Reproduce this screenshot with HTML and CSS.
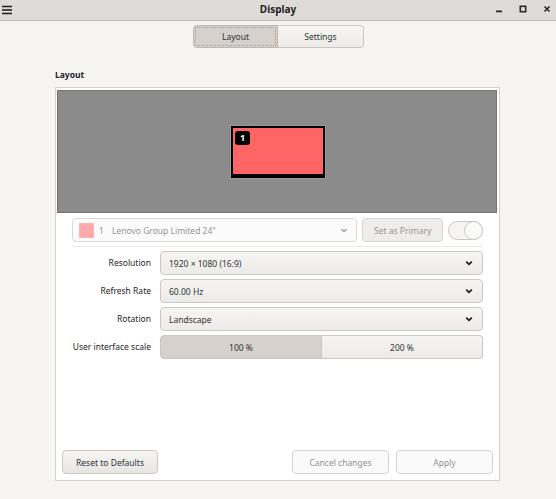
FILE: index.html
```
<!DOCTYPE html>
<html>
<head>
<meta charset="utf-8">
<link rel="stylesheet" href="styles.css">
</head>
<body>
<div class="window">
  <header class="titlebar">
    <svg class="hamburger" width="12" height="12" viewBox="0 0 12 12"><path d="M1 3.5h10M1 7h10M1 10.5h10" stroke="#1d1d1d" stroke-width="1.6"/></svg>
    <div class="title">Display</div>
    <div class="controls">
      <svg width="8" height="8" viewBox="0 0 8 8"><rect x="1" y="5.5" width="6" height="1.8" fill="#2a2a2a"/></svg>
      <svg width="8" height="8" viewBox="0 0 8 8"><rect x="1.3" y="1.3" width="5.4" height="5.4" fill="none" stroke="#2a2a2a" stroke-width="1.6"/></svg>
      <svg width="8" height="8" viewBox="0 0 8 8"><path d="M1.5 1.5l5 5M6.5 1.5l-5 5" stroke="#2a2a2a" stroke-width="1.6"/></svg>
    </div>
  </header>

  <div class="tabs">
    <button class="tab active">Layout</button>
    <button class="tab">Settings</button>
  </div>

  <h2 class="heading">Layout</h2>

  <section class="frame">
    <div class="canvas">
      <div class="monitor"><span class="badge">1</span></div>
    </div>

    <div class="body">
      <div class="monrow">
        <div class="mondrop">
          <span class="swatch"></span>
          <span class="num">1</span>
          <span class="monname">Lenovo Group Limited 24"</span>
          <svg class="chev light" width="10" height="10" viewBox="0 0 10 10"><path d="M2.5 4l2.5 2.5L7.5 4" fill="none" stroke="#9a9a9a" stroke-width="1.3"/></svg>
        </div>
        <button class="btn primary" disabled>Set as Primary</button>
        <div class="switch"><span class="knob"></span></div>
      </div>
      <div class="sep"></div>

      <div class="grid">
        <div class="label">Resolution</div>
        <div class="combo"><span>1920 × 1080 (16:9)</span><svg class="chev" width="10" height="10" viewBox="0 0 10 10"><path d="M2.2 3.6l2.8 2.8 2.8-2.8" fill="none" stroke="#1e1e1e" stroke-width="1.7"/></svg></div>

        <div class="label">Refresh Rate</div>
        <div class="combo"><span>60.00 Hz</span><svg class="chev" width="10" height="10" viewBox="0 0 10 10"><path d="M2.2 3.6l2.8 2.8 2.8-2.8" fill="none" stroke="#1e1e1e" stroke-width="1.7"/></svg></div>

        <div class="label">Rotation</div>
        <div class="combo"><span>Landscape</span><svg class="chev" width="10" height="10" viewBox="0 0 10 10"><path d="M2.2 3.6l2.8 2.8 2.8-2.8" fill="none" stroke="#1e1e1e" stroke-width="1.7"/></svg></div>

        <div class="label">User interface scale</div>
        <div class="scale">
          <button class="seg on">100 %</button>
          <button class="seg">200 %</button>
        </div>
      </div>

      <div class="footer">
        <button class="btn reset">Reset to Defaults</button>
        <div class="spacer"></div>
        <button class="btn ghost">Cancel changes</button>
        <button class="btn ghost">Apply</button>
      </div>
    </div>
  </section>
</div>
</body>
</html>
```

FILE: styles.css
```
* { box-sizing: border-box; }
html, body { margin: 0; padding: 0; }
body {
  width: 556px;
  height: 499px;
  background: #f6f5f4;
  font-family: "Noto Sans", "DejaVu Sans", sans-serif;
  font-size: 8.5px;
  color: #2e3436;
  overflow: hidden;
}
button { font-family: inherit; font-size: inherit; color: inherit; margin: 0; }

.window { display: flex; flex-direction: column; height: 499px; }

.titlebar {
  height: 21px;
  flex: none;
  background: #dedbd8;
  border-bottom: 1px solid #bfbab5;
  display: flex;
  align-items: center;
  position: relative;
}
.hamburger { margin-left: 1px; margin-top: -2px; }
.title {
  position: absolute;
  left: 0; right: 0; top: 0;
  text-align: center;
  line-height: 18px;
  font-weight: bold;
  font-size: 10px;
  color: #222;
}
.controls {
  margin-left: auto;
  display: flex;
  gap: 16px;
  margin-right: 5px;
  margin-top: -3px;
}

.tabs {
  display: flex;
  justify-content: center;
  margin-top: 4px;
  margin-left: 1px;
}
.tab {
  height: 23px;
  width: 86px;
  border: 1px solid #cdc7c2;
  background: linear-gradient(#f7f6f5, #ecebe9);
  padding: 0;
  color: #2e3436;
}
.tab:first-child { border-radius: 4px 0 0 4px; width: 85px; }
.tab:last-child { border-radius: 0 4px 4px 0; border-left: none; }
.tab.active {
  background: #d6d1cd;
  border-color: #bfb8b1;
  outline: 1px dotted #a39d97;
  outline-offset: -3px;
}

.heading {
  margin: 21px 0 0 55px;
  font-size: 8.5px;
  font-weight: bold;
  line-height: 12px;
  color: #1f2426;
}

.frame {
  margin: 6px 0 0 55px;
  width: 445px;
  height: 394px;
  border: 1px solid #d5d0cc;
  background: #ffffff;
  display: flex;
  flex-direction: column;
}
.canvas {
  margin: 2px 2px 0 1px;
  height: 123px;
  flex: none;
  background: #8b8b8b;
  border: 1px solid #747474;
  display: flex;
  align-items: center;
  justify-content: center;
}
.monitor {
  width: 94px;
  height: 52px;
  margin-left: 2px;
  background: #ff6565;
  border: 2px solid #000;
  border-bottom-width: 4px;
  box-shadow: 0 0 0 1px #9a9a9a;
  padding: 3px 0 0 2px;
}
.badge {
  display: inline-block;
  width: 15px;
  height: 14px;
  border-radius: 3px;
  background: #000;
  color: #fff;
  font-weight: bold;
  font-size: 9px;
  line-height: 14px;
  text-align: center;
}

.body {
  flex: 1;
  display: flex;
  flex-direction: column;
  padding: 5px 16px 6px 16px;
}
.monrow { display: flex; gap: 5px; align-items: center; height: 24px; }
.mondrop {
  width: 286px;
  height: 24px;
  border: 1px solid #dcd8d4;
  border-radius: 4px;
  background: #fcfbfb;
  display: flex;
  align-items: center;
  color: #929595;
  padding-left: 6px;
}
.swatch {
  width: 15px; height: 15px;
  background: #ffaaaa;
  outline: 1px dotted #f3c0c0;
  outline-offset: -1px;
}
.num { margin-left: 5px; width: 13px; }
.monname { flex: 1; }
.chev.light { margin-right: 7px; }
.btn {
  height: 24px;
  border: 1px solid #cdc7c2;
  border-radius: 4px;
  background: linear-gradient(#f6f5f4, #e8e6e3);
  padding: 0;
  color: #2e3436;
}
.btn.primary {
  width: 81px;
  background: #eeedeb;
  border-color: #d8d4d0;
  color: #939696;
}
.switch {
  width: 35px;
  height: 19px;
  border: 1px solid #cdc7c2;
  border-radius: 10px;
  background: #f6f5f4;
  position: relative;
}
.knob {
  position: absolute;
  right: -1px; top: -1px;
  width: 19px; height: 19px;
  border-radius: 50%;
  border: 1px solid #cdc7c2;
  background: #fbfafa;
}
.sep { height: 1px; background: #ebe9e7; margin-top: 4px; }

.grid {
  display: grid;
  grid-template-columns: 79px 1fr;
  column-gap: 9px;
  row-gap: 4px;
  margin-top: 4px;
}
.label {
  text-align: right;
  line-height: 24px;
  white-space: nowrap;
  color: #1f2426;
}
.combo {
  height: 24px;
  border: 1px solid #cdc7c2;
  border-radius: 4px;
  background: linear-gradient(#f6f5f4, #edebe9);
  display: flex;
  align-items: center;
  justify-content: space-between;
  padding: 0 8px 0 8px;
  color: #2e3436;
}
.scale { display: flex; height: 24px; }
.seg {
  flex: 1;
  border: 1px solid #cdc7c2;
  background: linear-gradient(#f6f5f4, #edebe9);
  padding: 0;
}
.seg.on {
  flex: none;
  width: 162px;
  background: #d6d1cd;
  border-color: #cdc7c2;
  border-radius: 4px 0 0 4px;
}
.seg:last-child { border-left: none; border-radius: 0 4px 4px 0; }

.footer {
  margin-top: auto;
  display: flex;
  gap: 7px;
  margin-left: -10px;
  margin-right: -10px;
}
.spacer { flex: 1; }
.btn.reset { width: 96px; }
.btn.ghost {
  width: 97px;
  background: #fbfafa;
  border-color: #d8d4d0;
  color: #8f9292;
}
```
